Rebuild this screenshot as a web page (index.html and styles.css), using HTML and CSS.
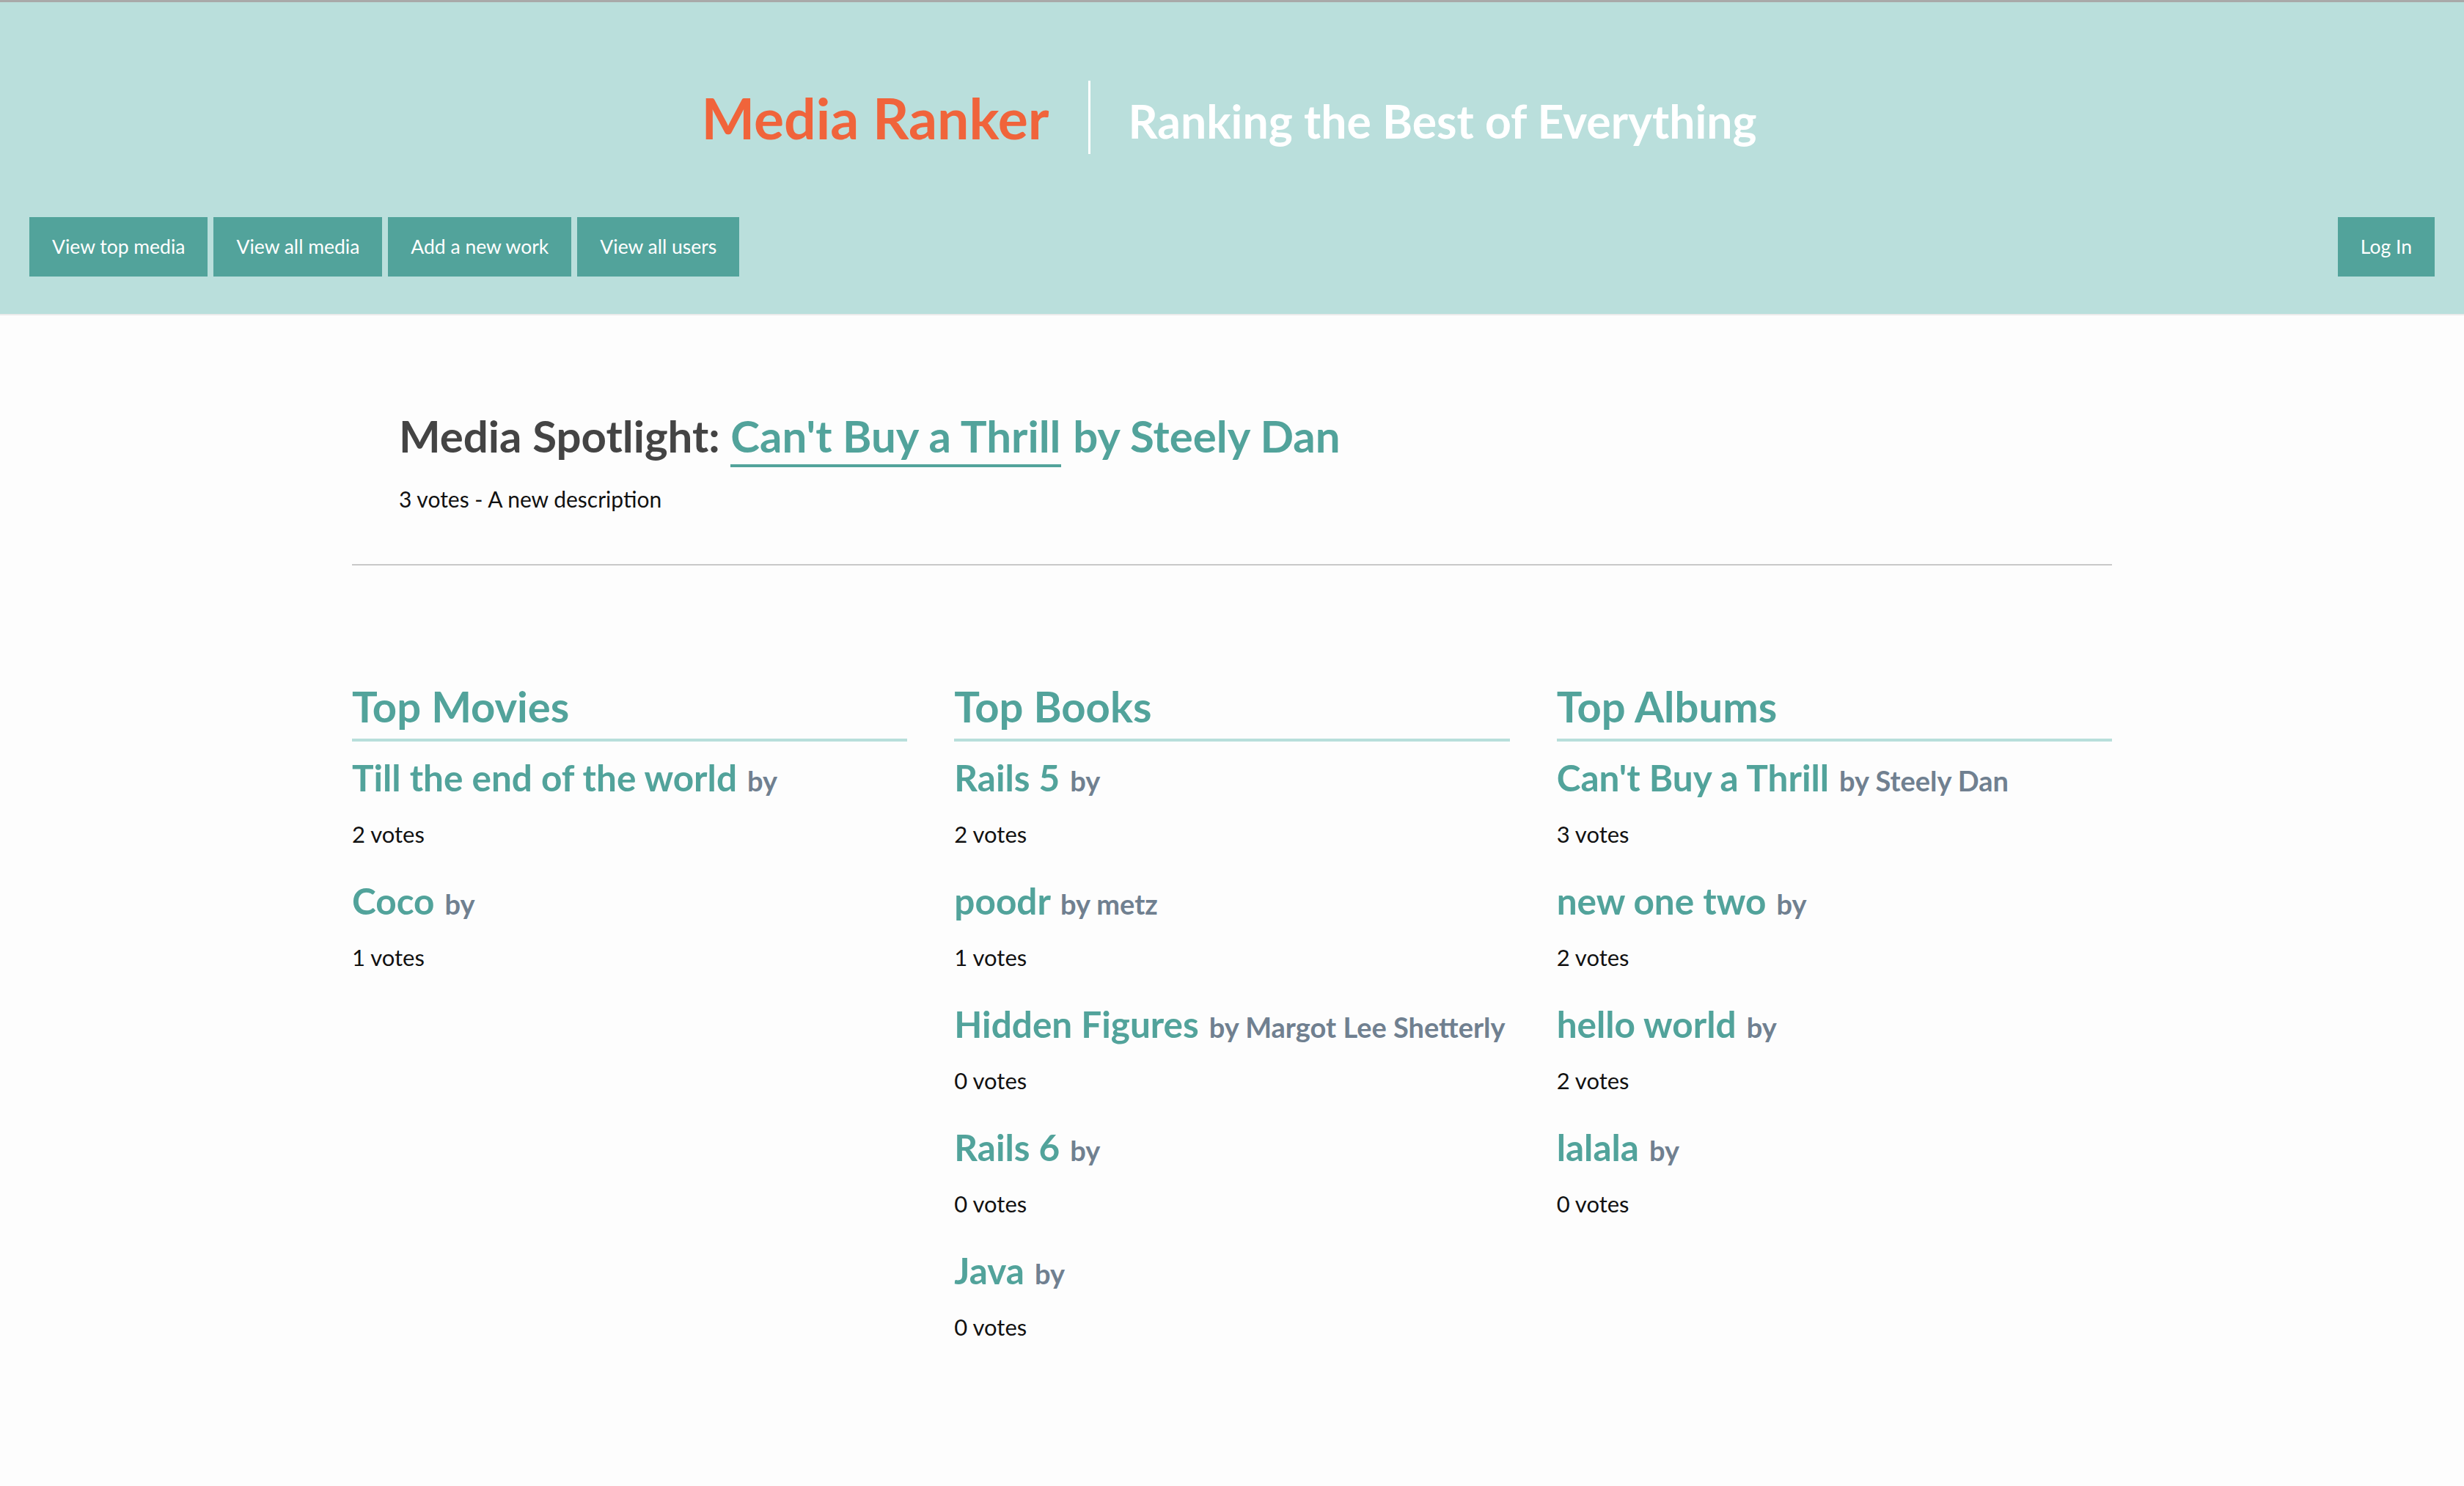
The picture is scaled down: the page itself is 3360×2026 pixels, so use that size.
FILE: index.html
```html
<!DOCTYPE html>
<html lang="en">
<head>
<meta charset="utf-8">
<title>Media Ranker</title>
<link rel="stylesheet" href="styles.css">
</head>
<body>
<header class="site-header">
  <div class="brand">
    <h1 class="brand-title">Media Ranker</h1>
    <span class="brand-divider"></span>
    <p class="brand-tagline">Ranking the Best of Everything</p>
  </div>
  <nav class="site-nav">
    <ul class="nav-links">
      <li><a class="btn" href="#">View top media</a></li>
      <li><a class="btn" href="#">View all media</a></li>
      <li><a class="btn" href="#">Add a new work</a></li>
      <li><a class="btn" href="#">View all users</a></li>
    </ul>
    <a class="btn" href="#">Log In</a>
  </nav>
</header>

<main class="page">
  <section class="spotlight">
    <h2 class="spotlight-title">Media Spotlight: <a class="spotlight-link" href="#">Can't Buy a Thrill</a> <span class="spotlight-by">by Steely Dan</span></h2>
    <p class="spotlight-meta">3 votes - A new description</p>
  </section>

  <div class="top-lists">
    <section class="top-list">
      <h2 class="top-list-title">Top Movies</h2>
      <div class="work">
        <h3 class="work-title"><a class="work-link" href="#">Till the end of the world</a> <span class="work-by">by</span></h3>
        <p class="work-votes">2 votes</p>
      </div>
      <div class="work">
        <h3 class="work-title"><a class="work-link" href="#">Coco</a> <span class="work-by">by</span></h3>
        <p class="work-votes">1 votes</p>
      </div>
    </section>

    <section class="top-list">
      <h2 class="top-list-title">Top Books</h2>
      <div class="work">
        <h3 class="work-title"><a class="work-link" href="#">Rails 5</a> <span class="work-by">by</span></h3>
        <p class="work-votes">2 votes</p>
      </div>
      <div class="work">
        <h3 class="work-title"><a class="work-link" href="#">poodr</a> <span class="work-by">by metz</span></h3>
        <p class="work-votes">1 votes</p>
      </div>
      <div class="work">
        <h3 class="work-title"><a class="work-link" href="#">Hidden Figures</a> <span class="work-by">by Margot Lee Shetterly</span></h3>
        <p class="work-votes">0 votes</p>
      </div>
      <div class="work">
        <h3 class="work-title"><a class="work-link" href="#">Rails 6</a> <span class="work-by">by</span></h3>
        <p class="work-votes">0 votes</p>
      </div>
      <div class="work">
        <h3 class="work-title"><a class="work-link" href="#">Java</a> <span class="work-by">by</span></h3>
        <p class="work-votes">0 votes</p>
      </div>
    </section>

    <section class="top-list">
      <h2 class="top-list-title">Top Albums</h2>
      <div class="work">
        <h3 class="work-title"><a class="work-link" href="#">Can't Buy a Thrill</a> <span class="work-by">by Steely Dan</span></h3>
        <p class="work-votes">3 votes</p>
      </div>
      <div class="work">
        <h3 class="work-title"><a class="work-link" href="#">new one two</a> <span class="work-by">by</span></h3>
        <p class="work-votes">2 votes</p>
      </div>
      <div class="work">
        <h3 class="work-title"><a class="work-link" href="#">hello world</a> <span class="work-by">by</span></h3>
        <p class="work-votes">2 votes</p>
      </div>
      <div class="work">
        <h3 class="work-title"><a class="work-link" href="#">lalala</a> <span class="work-by">by</span></h3>
        <p class="work-votes">0 votes</p>
      </div>
    </section>
  </div>
</main>
</body>
</html>
```

FILE: styles.css
```css
* {
  box-sizing: border-box;
}

body {
  margin: 0;
  background: #fdfdfd;
  color: #111;
  font-family: Lato, "Open Sans", sans-serif;
  border-top: 3px solid #a9a9a9;
}

/* Header */
.site-header {
  background: #badfdc;
  border-bottom: 2px solid #ebebeb;
  padding: 107px 40px 51px;
}

.brand {
  display: flex;
  justify-content: center;
  align-items: center;
  height: 100px;
  padding-right: 8px;
}

.brand-title {
  margin: 0;
  font-size: 77px;
  line-height: 1.2;
  font-weight: 700;
  color: #f0643b;
}

.brand-divider {
  width: 3px;
  height: 100px;
  margin: 0 52px 0 53px;
  background: #ffffff;
}

.brand-tagline {
  margin: 0;
  padding-top: 8px;
  font-size: 62.5px;
  line-height: 1.2;
  font-weight: 700;
  color: #ffffff;
}

.site-nav {
  display: flex;
  justify-content: space-between;
  margin-top: 86px;
}

.nav-links {
  display: flex;
  gap: 8px;
  list-style: none;
  margin: 0;
  padding: 0;
}

.btn {
  display: block;
  background: #52a39b;
  color: #ffffff;
  font-size: 26.5px;
  line-height: 36px;
  padding: 22px 31px 23px;
  text-decoration: none;
}

/* Main */
.page {
  width: 2400px;
  margin: 0 auto;
  padding: 128px 0 120px;
}

.spotlight {
  padding: 0 64px 68px;
  border-bottom: 2px solid #c9c9c9;
}

.spotlight-title {
  margin: 0;
  font-size: 60px;
  line-height: 72px;
  font-weight: 700;
  color: #444444;
}

.spotlight-link {
  color: #52a39b;
  text-decoration: none;
  padding-bottom: 3px;
  border-bottom: 4px solid #52a39b;
}

.spotlight-by {
  margin-left: 2px;
  color: #52a39b;
}

.spotlight-meta {
  margin: 29px 0 0;
  font-size: 30px;
  line-height: 42px;
  color: #111;
}

.top-lists {
  display: grid;
  grid-template-columns: repeat(3, minmax(0, 1fr));
  column-gap: 64px;
  padding-top: 157px;
}

.top-list-title {
  margin: 0 0 18px;
  padding-bottom: 9px;
  border-bottom: 4px solid #b8dfdb;
  font-size: 58px;
  line-height: 1.2;
  font-weight: 700;
  color: #52a39b;
}

.work {
  margin-bottom: 37px;
}

.work-title {
  margin: 0 0 24px;
  font-size: 49.5px;
  line-height: 62px;
  font-weight: 700;
  white-space: nowrap;
}

.work-link {
  color: #52a39b;
  text-decoration: none;
}

.work-by {
  margin-left: 2px;
  font-size: 38px;
  line-height: 1;
  color: #708090;
}

.work-votes {
  margin: 0;
  font-size: 31px;
  line-height: 45px;
  color: #111;
}
```
